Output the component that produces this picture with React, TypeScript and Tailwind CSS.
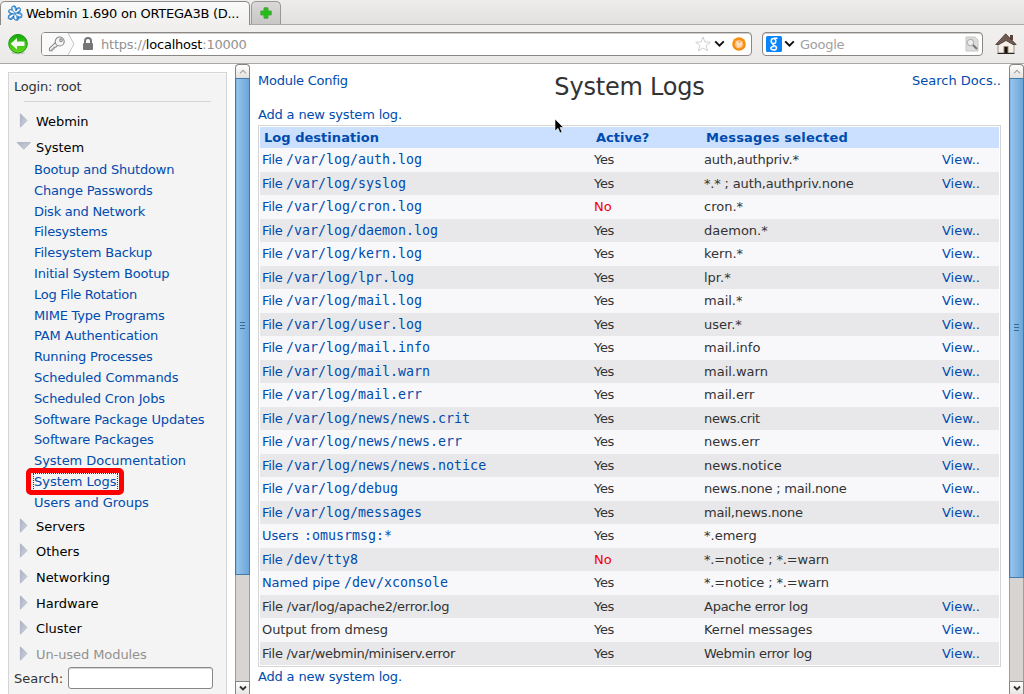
import React from "react";

const modules = [
  ["Bootup and Shutdown", "tracking-[-0.2px]"],
  ["Change Passwords", "tracking-[-0.17px]"],
  ["Disk and Network", "tracking-[-0.25px]"],
  ["Filesystems", "tracking-[-0.2px]"],
  ["Filesystem Backup", "tracking-[-0.15px]"],
  ["Initial System Bootup", "tracking-[-0.18px]"],
  ["Log File Rotation", "tracking-[-0.27px]"],
  ["MIME Type Programs", "tracking-[-0.2px]"],
  ["PAM Authentication", "tracking-[-0.14px]"],
  ["Running Processes", "tracking-[-0.17px]"],
  ["Scheduled Commands", "tracking-[-0.07px]"],
  ["Scheduled Cron Jobs", "tracking-[-0.13px]"],
  ["Software Package Updates", "tracking-[-0.12px]"],
  ["Software Packages", "tracking-[-0.14px]"],
  ["System Documentation", "tracking-[-0.04px]"],
  ["System Logs", ""],
  ["Users and Groups", "tracking-[-0.04px]"],
];

type Row = { kind: string; path?: string; active?: boolean; msg: string; view?: boolean; plain?: string; fit?: string };

const rows: Row[] = [
  { kind: "File", path: "/var/log/auth.log", msg: "auth,authpriv.*", view: true, fit: "tracking-[-0.2px]" },
  { kind: "File", path: "/var/log/syslog", msg: "*.* ; auth,authpriv.none", view: true, fit: "tracking-[-0.16px]" },
  { kind: "File", path: "/var/log/cron.log", msg: "cron.*", active: false },
  { kind: "File", path: "/var/log/daemon.log", msg: "daemon.*", view: true },
  { kind: "File", path: "/var/log/kern.log", msg: "kern.*", view: true },
  { kind: "File", path: "/var/log/lpr.log", msg: "lpr.*", view: true },
  { kind: "File", path: "/var/log/mail.log", msg: "mail.*", view: true },
  { kind: "File", path: "/var/log/user.log", msg: "user.*", view: true },
  { kind: "File", path: "/var/log/mail.info", msg: "mail.info", view: true },
  { kind: "File", path: "/var/log/mail.warn", msg: "mail.warn", view: true },
  { kind: "File", path: "/var/log/mail.err", msg: "mail.err", view: true },
  { kind: "File", path: "/var/log/news/news.crit", msg: "news.crit", view: true, fit: "tracking-[-0.35px]" },
  { kind: "File", path: "/var/log/news/news.err", msg: "news.err", view: true, fit: "tracking-[-0.1px]" },
  { kind: "File", path: "/var/log/news/news.notice", msg: "news.notice", view: true },
  { kind: "File", path: "/var/log/debug", msg: "news.none ; mail.none", view: true, fit: "tracking-[-0.22px]" },
  { kind: "File", path: "/var/log/messages", msg: "mail,news.none", view: true, fit: "tracking-[-0.25px]" },
  { kind: "Users", path: ":omusrmsg:*", msg: "*.emerg" },
  { kind: "File", path: "/dev/tty8", msg: "*.=notice ; *.=warn", active: false, fit: "tracking-[-0.15px]" },
  { kind: "Named pipe", path: "/dev/xconsole", msg: "*.=notice ; *.=warn", fit: "tracking-[-0.15px]" },
  { kind: "File /var/log/apache2/error.log", plain: "tracking-[-0.23px]", msg: "Apache error log", view: true, fit: "tracking-[-0.26px]" },
  { kind: "Output from dmesg", plain: "tracking-[-0.1px]", msg: "Kernel messages", view: true, fit: "tracking-[-0.12px]" },
  { kind: "File /var/webmin/miniserv.error", plain: "tracking-[-0.29px]", msg: "Webmin error log", view: true, fit: "tracking-[-0.28px]" },
];

function Arrow({ open = false }: { open?: boolean }) {
  return (
    <svg width="16" height="16" viewBox="0 0 16 16" className="shrink-0">
      <defs>
        <linearGradient id="arrow" x1="0" y1="0" x2="1" y2="1">
          <stop offset="0" stopColor="#a9b0c2" />
          <stop offset="1" stopColor="#d3d7e0" />
        </linearGradient>
      </defs>
      <path d={open ? "M2 3.5H15.5L8.8 10.3Z" : "M5.4 .8V14.2L12 7.5Z"} fill="url(#arrow)" stroke="#a4acc0" strokeWidth=".7" />
    </svg>
  );
}

function Category({ name, className, open, dim }: { name: string; className: string; open?: boolean; dim?: boolean }) {
  return (
    <div className={"flex items-center pl-[6px] " + className}>
      <Arrow open={open} />
      <span className={"ml-[5px] mt-[2px] " + (dim ? "tracking-[-0.08px] text-[#919191]" : "tracking-[-0.05px] text-black")}>{name}</span>
    </div>
  );
}

function Scrollbar({ thumb }: { thumb: string }) {
  return (
    <div className="flex w-[15px] shrink-0 flex-col">
      <div className="flex h-[14px] items-center justify-center rounded-t-[4px] border border-b-0 border-[#878480] bg-gradient-to-b from-white to-[#e4e2df]">
        <svg width="8" height="5" viewBox="0 0 8 5"><path d="M1 4.3 4 1.3 7 4.3" fill="none" stroke="#a8a5a2" strokeWidth="1.2" /></svg>
      </div>
      <div className={"flex flex-col items-center justify-center gap-[2px] border border-[#427ba9] bg-gradient-to-r from-[#9ac6ed] to-[#6ba5d9] pb-[2px] shadow-[inset_1px_0_#85b6df] " + thumb}>
        <i className="h-px w-[5px] bg-[#376b98]" />
        <i className="h-px w-[5px] bg-[#376b98]" />
        <i className="h-px w-[5px] bg-[#376b98]" />
      </div>
      <div className="flex-1 border-x border-[#a19e9a] bg-[#d8d4d1]" />
      <div className="flex h-[13px] items-center justify-center border border-b-0 border-[#878480] bg-gradient-to-b from-white to-[#e8e6e4]">
        <svg width="8" height="6" viewBox="0 0 8 6"><path d="M1 1.5 4 4.5 7 1.5" fill="none" stroke="#333" strokeWidth="1.8" /></svg>
      </div>
    </div>
  );
}

function WebminLogo() {
  return (
    <svg width="16" height="17" viewBox="0 0 16 17" className="shrink-0">
      <path d="M4.5 4.5 5 1.5 8 .8 9.5 3.5 12.5 2.5 13.8 5 12.5 7 15 9.5 14.6 12.5 12 13 10.8 15.3 8 15 6.5 13 4 14.8 1.2 13.5 1.5 10.5 3.5 9 1.5 7 2 4.8Z" fill="#5b9fd6" stroke="#3b86c7" strokeWidth="1" strokeLinejoin="round" />
      <path d="M6.3 2.8 7.6 6M12 4.6 9 6.6M13 10.5 10 9.5M8.7 13.5 8 10.8M3.2 12.2 5.8 10M3.4 6 6 7.6" stroke="#fff" strokeWidth="1.6" strokeLinecap="round" />
      <path d="M9.5 3.8 9 6M12.3 7.4 10.5 8M10.5 13.8 11.5 11.8M5.8 12.8 7 10.8M3.8 9 6 8.8" stroke="#1763ab" strokeWidth="1" />
    </svg>
  );
}

function Chevron() {
  return <svg width="11" height="8" viewBox="0 0 11 8" className="shrink-0"><path d="M1.2 1.4 5.5 5.7 9.8 1.4" fill="none" stroke="#111" strokeWidth="2" /></svg>;
}

function Browser() {
  return (
    <header className="h-[64px] shrink-0">
      <div className="flex h-[25px] items-end border-b border-[#aaa9a7] bg-gradient-to-b from-[#eeedec] to-[#e2e1df]">
        <div className="-mb-px flex h-[24px] w-[250px] items-center rounded-t-[5px] border border-b-0 border-[#8b8a88] bg-gradient-to-b from-[#fafafa] to-[#f0efee] pl-[6px]">
          <WebminLogo />
          <span className="ml-[3px] mt-px whitespace-nowrap text-[13px] tracking-[-0.26px] text-black">Webmin 1.690 on ORTEGA3B (D...</span>
        </div>
        <div className="ml-px flex h-[23px] w-[30px] items-center justify-center rounded-t-[5px] border border-b-0 border-[#999896] bg-gradient-to-b from-[#dad9d7] to-[#c8c7c5]">
          <svg width="12" height="12" viewBox="0 0 12 12"><path d="M4 .8H8V4H11.2V8H8V11.2H4V8H.8V4H4Z" fill="#1fc012" stroke="#4fa648" strokeWidth="1" /></svg>
        </div>
      </div>
      <div className="flex h-[39px] items-center border-b border-[#aaa8a6] bg-gradient-to-b from-[#f1f0ef] to-[#ebeae9] pl-[7px]">
        <svg width="22" height="22" viewBox="0 0 22 22" className="shrink-0">
          <defs><linearGradient id="back" x2="0" y2="1"><stop stopColor="#14a90d" /><stop offset="1" stopColor="#65dc18" /></linearGradient></defs>
          <ellipse cx="11" cy="20" rx="7" ry="1.5" fill="#c8cbc5" />
          <circle cx="11" cy="10.7" r="9.3" fill="url(#back)" stroke="#1a9713" />
          <path d="M3.7 10.7 10 5V8.5H17.5V13H10V16.5Z" fill="#f4faef" />
        </svg>
        <div className="ml-[12px] flex h-[24px] w-[711px] shrink-0 items-center rounded-[4px] border border-[#8a8784] bg-white shadow-[inset_0_1px_#d1cfcd]">
          <svg width="34" height="22" viewBox="0 0 34 22" className="shrink-0">
            <path d="M0 2Q0 0 2 0H26L32 11 26 22H2Q0 22 0 20Z" fill="#fafafa" />
            <path d="M26 0 32 11 26 22" fill="none" stroke="#c7c5c3" />
            <g fill="#f4f4f4" stroke="#888" strokeWidth="1.1"><path d="M14.4 8.7 7.5 15.2V17.7H10.2V16H12V14.2H13.8L16.5 11.4" /><circle cx="17.7" cy="8.5" r="4.5" /><circle cx="19" cy="7.2" r="1.3" /></g>
          </svg>
          <svg width="12" height="14" viewBox="0 0 12 14" className="ml-[6px] shrink-0"><path d="M3 6V4A3 3 0 0 1 9 4V6" fill="none" stroke="#777" strokeWidth="2" /><rect x="1" y="6" width="10" height="7" rx="1" fill="#777" /></svg>
          <span className="ml-[7px] mt-px flex-1 text-[13px] tracking-[-0.22px] text-[#929292]">https://<span className="text-black">localhost</span>:10000</span>
          <svg width="16" height="16" viewBox="0 0 16 16" className="mr-[-1px] shrink-0"><path d="m8 1 2 5 5.3.3-4.1 3.3 1.4 5.2L8 12l-4.6 2.8 1.4-5.2L.7 6.3 6 6Z" fill="#fff" stroke="#cfcfcf" /></svg>
          <div className="ml-[4px] mr-[6px] flex"><Chevron /></div>
          <svg width="16" height="16" viewBox="0 0 16 16" className="mr-[4px] shrink-0"><circle cx="8" cy="8" r="6.8" fill="#f98e0c" /><circle cx="8" cy="8.3" r="4.3" fill="#ffb978" /><path d="m4.5 4.5 3 1 .5 2 3.5-2-1 4.5-4 2Z" fill="#fce0c0" /></svg>
        </div>
        <div className="ml-[10px] flex h-[24px] w-[221px] shrink-0 items-center rounded-[4px] border border-[#8a8784] bg-white pl-[3px] shadow-[inset_0_1px_#d1cfcd]">
          <svg width="16" height="16" viewBox="0 0 16 16" className="mr-[2px] shrink-0">
            <rect width="16" height="16" rx="1.5" fill="#0a84fb" />
            <g fill="none" stroke="#fff" strokeWidth="1.5"><ellipse cx="7.5" cy="5" rx="2.3" ry="2.6" /><path d="M8 2.3H11.5M7.3 7.6Q6.3 8.8 8 9.5C12 11 10.8 14 7.6 14C4 14 3.8 10.6 7.8 10.4" /></g>
          </svg>
          <Chevron />
          <span className="ml-[5px] mt-px flex-1 text-[13px] tracking-[-0.25px] text-[#a0a0a0]">Google</span>
          <svg width="14" height="16" viewBox="0 0 14 16" className="mr-[3px]"><path d="M1 1H10L13 4V15H1Z" fill="#dddcdc" stroke="#c7c6c5" /><circle cx="5.5" cy="6.5" r="3.2" fill="#eee" stroke="#a5a5a5" /><path d="m8 9 4 4" stroke="#777" strokeWidth="2" /></svg>
        </div>
        <svg width="22" height="22" viewBox="0 0 22 22" className="ml-[12px] shrink-0">
          <path d="M15 2H18V7H15Z" fill="#5d4234" />
          <path d="M3 11 11 4 19 11V20H3Z" fill="#f4f0e8" stroke="#99938b" />
          <path d="M.7 11.5 10.7.8 21.2 11.5H18L11 7.5 4 11.5Z" fill="#705b50" stroke="#352b25" strokeWidth=".7" />
          <path d="M8.5 13H13.5V20H8.5Z" fill="#a0886f" /><path d="M9.5 14H12.5V20H9.5Z" fill="#15110b" /><path d="M2.5 20.5H19.5" stroke="#282522" />
        </svg>
      </div>
    </header>
  );
}

export default function App() {
  return (
    <div className="flex h-[694px] w-[1024px] flex-col overflow-hidden bg-white font-['DejaVu_Sans',sans-serif] text-[13px] leading-[16px] text-[#333]">
      <Browser />
      <div className="flex min-h-0 flex-1">
        <aside className="flex w-[235px] shrink-0 overflow-hidden pl-[8px] pt-[8px]">
          <div className="h-[640px] w-[219px] border border-[#d5d5d5] bg-[#f4f4f4] shadow-[inset_0_1px_#fbfbfb]">
            <div className="ml-[5px] h-[28px] pt-[6px] tracking-[-0.2px]">Login: root</div>
            <div className="ml-[15px] h-px w-[187px] bg-[#d6d6d6]" />
            <Category name="Webmin" className="mt-[10px] h-[18px]" />
            <Category name="System" open className="mt-[8px] h-[18px]" />
            <nav className="mt-[3.7px] text-[#004bae]">
              {modules.map(([m, c]) => (
                <div key={m} className="flex h-[20.8px] items-center pl-[25px]">
                  {m === "System Logs" ? (
                    <a className="relative whitespace-nowrap outline-1 outline-dotted outline-[#003f96]">
                      {m}
                      <i className="absolute -bottom-[5px] -left-[8px] -right-[7px] -top-[6px] rounded-[5px] border-[5px] border-[#fe0000]" />
                    </a>
                  ) : (
                    <a className={"whitespace-nowrap " + c}>{m}</a>
                  )}
                </div>
              ))}
            </nav>
            <Category name="Servers" className="mt-[3.3px] h-[18px]" />
            <Category name="Others" className="mt-[7px] h-[18px]" />
            <Category name="Networking" className="mt-[8px] h-[18px]" />
            <Category name="Hardware" className="mt-[8px] h-[18px]" />
            <Category name="Cluster" className="mt-[7px] h-[18px]" />
            <Category name="Un-used Modules" dim className="mt-[8px] h-[18px]" />
            <div className="mt-[4px] flex items-center pl-[5px]">
              <span className="pt-[2px]">Search:</span>
              <div className="ml-[5px] h-[22px] w-[145px] rounded-[3px] border border-[#8a8784] bg-white shadow-[inset_0_1px_#d9d7d5]" />
            </div>
          </div>
        </aside>
        <Scrollbar thumb="h-[497px]" />
        <main className="flex min-w-0 flex-1 flex-col pl-[8px] text-[#004bae]">
          <div className="flex h-[43px] items-start justify-between pr-[8px] pt-[9px]">
            <a className="w-[170px] tracking-[-0.25px]">Module Config</a>
            <h1 className="text-[24px] leading-[28px] tracking-[-0.2px] text-[#333]">System Logs</h1>
            <a className="w-[170px] text-right">Search Docs..</a>
          </div>
          <a className="h-[18px] tracking-[-0.17px]">Add a new system log.</a>
          <section className="w-[743px] border border-[#d5d5d5] p-px">
            <div className="grid h-[21px] grid-cols-[332px_110px_1fr] items-center bg-[#cae0fe] pl-[4px] font-bold">
              <span className="tracking-[0.03px]">Log destination</span>
              <span>Active?</span>
              <span className="tracking-[0.22px]">Messages selected</span>
            </div>
            {rows.map((r, i) => (
              <div key={i} className={"grid grid-cols-[332px_110px_238px_1fr] items-center whitespace-nowrap pl-[2px] " + (i % 2 ? "h-[23px] bg-[#e8e8ea]" : "h-[24px] bg-[#f8f8fb]")}>
                <span className={r.plain ? "text-[#333] " + r.plain : "flex items-baseline"}>
                  {r.plain ? r.kind : <span className={r.kind === "File" ? "w-[24px] tracking-[-0.3px]" : r.kind === "Users" ? "w-[42px]" : "w-[82px] tracking-[-0.1px]"}>{r.kind}</span>}
                  {r.path && <span className="font-['DejaVu_Sans_Mono',monospace] text-[13.3px] leading-[15px]">{r.path}</span>}
                </span>
                <span className={r.active === false ? "text-[#f00000]" : "tracking-[-0.3px] text-[#333]"}>{r.active === false ? "No" : "Yes"}</span>
                <span className={"text-[#333] " + (r.fit ?? "")}>{r.msg}</span>
                <span>{r.view ? "View.." : ""}</span>
              </div>
            ))}
          </section>
          <a className="pt-[2px] tracking-[-0.17px]">Add a new system log.</a>
        </main>
        <Scrollbar thumb="h-[500px]" />
      </div>
      <svg width="10" height="16" viewBox="0 0 10 16" className="absolute left-[554px] top-[118px]"><path d="M1 1V13L4 10.3 6 15 8 14 6 9.5H9.5Z" fill="#000" stroke="#fff" strokeWidth=".6" /></svg>
    </div>
  );
}
